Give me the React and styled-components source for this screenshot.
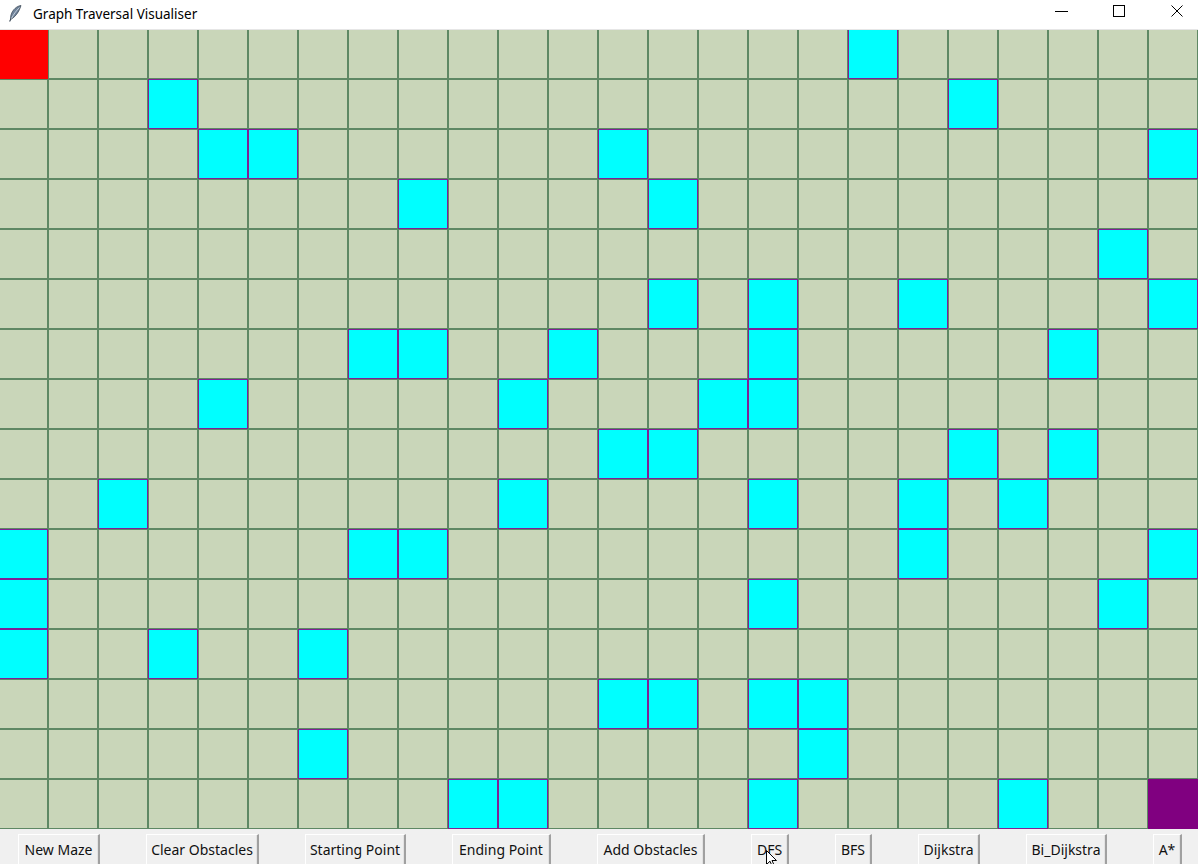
import React from "react";
import styled, { createGlobalStyle } from "styled-components";

const ROWS = 16;
const COLS = 24;

// [row, col] of the obstacle cells
const obstacles = [
  [0, 17],
  [1, 3], [1, 19],
  [2, 4], [2, 5], [2, 12], [2, 23],
  [3, 8], [3, 13],
  [4, 22],
  [5, 13], [5, 15], [5, 18], [5, 23],
  [6, 7], [6, 8], [6, 11], [6, 15], [6, 21],
  [7, 4], [7, 10], [7, 14], [7, 15],
  [8, 12], [8, 13], [8, 19], [8, 21],
  [9, 2], [9, 10], [9, 15], [9, 18], [9, 20],
  [10, 0], [10, 7], [10, 8], [10, 18], [10, 23],
  [11, 0], [11, 15], [11, 22],
  [12, 0], [12, 3], [12, 6],
  [13, 12], [13, 13], [13, 15], [13, 16],
  [14, 6], [14, 16],
  [15, 9], [15, 10], [15, 15], [15, 20],
];

const obstacleSet = new Set(obstacles.map(([r, c]) => `${r}-${c}`));

const buttons = [
  { label: "New Maze", width: 82 },
  { label: "Clear Obstacles", width: 113 },
  { label: "Starting Point", width: 101 },
  { label: "Ending Point", width: 99 },
  { label: "Add Obstacles", width: 108 },
  { label: "DFS", width: 38 },
  { label: "BFS", width: 37 },
  { label: "Dijkstra", width: 62 },
  { label: "Bi_Dijkstra", width: 81 },
  { label: "A*", width: 29 },
];

const GlobalStyle = createGlobalStyle`
  html, body {
    margin: 0;
    padding: 0;
    background: #f0f0f0;
    overflow: hidden;
  }
  body {
    font-family: "Noto Sans", "Open Sans", sans-serif;
  }
`;

const Window = styled.div`
  width: 1198px;
  height: 864px;
  display: flex;
  flex-direction: column;
  overflow: hidden;
  position: relative;
`;

const TitleBar = styled.div`
  height: 29px;
  flex: none;
  background: #ffffff;
  border-bottom: 1px solid #e6e6e6;
  display: flex;
  align-items: center;
`;

const AppIcon = styled.div`
  width: 16px;
  height: 16px;
  margin-left: 8px;
  margin-top: -2px;
  display: flex;
  align-items: center;
`;

const Title = styled.div`
  margin-left: 9px;
  font-size: 13.5px;
  color: #000;
  flex: 1;
  margin-top: -2px;
`;

const Controls = styled.div`
  display: flex;
  height: 100%;
  margin-right: -8px;
`;

const ControlButton = styled.div`
  width: 58px;
  height: 29px;
  display: flex;
  align-items: center;
  justify-content: center;
  margin-top: -4px;
`;

const Board = styled.div`
  height: 800px;
  flex: none;
  overflow: hidden;
`;

const Grid = styled.div`
  display: grid;
  grid-template-columns: repeat(${COLS}, 50px);
  grid-auto-rows: 50px;
  margin-left: -2px;
  margin-top: -1px;
`;

const cellColors = {
  empty: { fill: "#c9d6b9", line: "#5e8864" },
  wall: { fill: "#00ffff", line: "#7f1f96" },
  start: { fill: "#ff0000", line: "#ff0000" },
  end: { fill: "#800080", line: "#800080" },
};

const Cell = styled.div`
  box-sizing: border-box;
  border: 1px solid ${({ $kind }) => cellColors[$kind].line};
  background: ${({ $kind }) => cellColors[$kind].fill};
`;

const ButtonBar = styled.div`
  flex: 1;
  background: #f0f0f0;
  display: flex;
  align-items: flex-start;
  padding-left: 18px;
  padding-top: 4px;
  gap: 46px;
  position: relative;
`;

const TkButton = styled.div`
  box-sizing: border-box;
  width: ${({ $w }) => $w}px;
  height: 34px;
  flex: none;
  background: #f0f0f0;
  border-top: 1px solid #ffffff;
  border-left: 1px solid #ffffff;
  border-right: 2px solid #a0a0a0;
  box-shadow: inset -1px 0 0 #e3e3e3;
  display: flex;
  justify-content: center;
  padding-top: 5px;
  font-size: 14px;
  color: #111;
  white-space: nowrap;
`;

const Pointer = styled.div`
  position: absolute;
  left: 766px;
  top: 20px;
  width: 12px;
  height: 18px;
`;

function Feather() {
  return (
    <svg width="14" height="17" viewBox="0 0 14 17">
      <path
        d="M13 0.5 C9 1 4.5 4.5 3 10 C2.6 11.5 2.5 13 2.6 14 L4.2 13.6 C8 11 11.5 6 13 0.5 Z"
        fill="#6f8299"
        stroke="#33414f"
        strokeWidth="0.7"
      />
      <path d="M11.5 2.5 C8 6 5.5 9.5 3.4 13.6" fill="none" stroke="#d6e0ea" strokeWidth="0.8" />
      <path d="M3 13.8 L1.6 16.5" stroke="#33414f" strokeWidth="1.1" />
    </svg>
  );
}

export default function App() {
  const cells = [];
  for (let r = 0; r < ROWS; r++) {
    for (let c = 0; c < COLS; c++) {
      let kind = "empty";
      if (r === 0 && c === 0) kind = "start";
      else if (r === ROWS - 1 && c === COLS - 1) kind = "end";
      else if (obstacleSet.has(`${r}-${c}`)) kind = "wall";
      cells.push(<Cell key={`${r}-${c}`} $kind={kind} />);
    }
  }

  return (
    <>
      <GlobalStyle />
      <Window>
        <TitleBar>
          <AppIcon>
            <Feather />
          </AppIcon>
          <Title>Graph Traversal Visualiser</Title>
          <Controls>
            <ControlButton>
              <svg width="13" height="12" viewBox="0 0 13 12">
                <path d="M0 6.5 H13" stroke="#000" strokeWidth="1" />
              </svg>
            </ControlButton>
            <ControlButton>
              <svg width="12" height="12" viewBox="0 0 12 12">
                <rect x="0.5" y="0.5" width="11" height="11" fill="none" stroke="#000" strokeWidth="1" />
              </svg>
            </ControlButton>
            <ControlButton>
              <svg width="12" height="12" viewBox="0 0 12 12">
                <path d="M0.5 0.5 L11.5 11.5 M11.5 0.5 L0.5 11.5" stroke="#000" strokeWidth="1" />
              </svg>
            </ControlButton>
          </Controls>
        </TitleBar>
        <Board>
          <Grid>{cells}</Grid>
        </Board>
        <ButtonBar>
          {buttons.map((b) => (
            <TkButton key={b.label} $w={b.width}>
              {b.label}
            </TkButton>
          ))}
          <Pointer>
            <svg width="12" height="18" viewBox="0 0 12 18">
              <path
                d="M0.5 0.5 L0.5 14.5 L4 11.2 L6.3 16.5 L8.3 15.6 L6 10.5 L10.5 10.5 Z"
                fill="#fff"
                stroke="#000"
                strokeWidth="1"
              />
            </svg>
          </Pointer>
        </ButtonBar>
      </Window>
    </>
  );
}
